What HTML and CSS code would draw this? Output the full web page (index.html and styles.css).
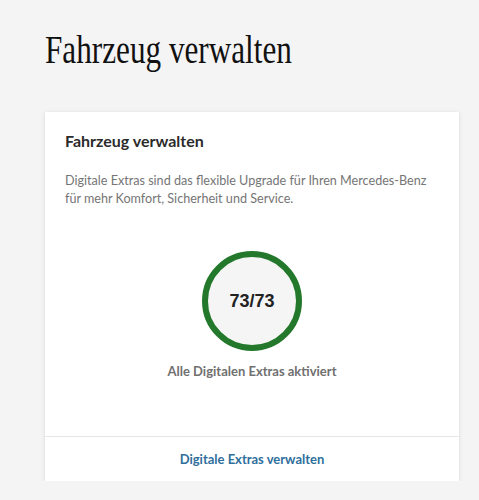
FILE: index.html
```html
<!DOCTYPE html>
<html lang="de">
<head>
<meta charset="utf-8">
<title>Fahrzeug verwalten</title>
<link rel="stylesheet" href="styles.css">
</head>
<body>
<main class="page">
  <h1 class="page-title"><span class="page-title-text">Fahrzeug verwalten</span></h1>
  <section class="card">
    <div class="card-body">
      <h2 class="card-title">Fahrzeug verwalten</h2>
      <p class="card-desc">Digitale Extras sind das flexible Upgrade für Ihren Mercedes-Benz für mehr Komfort, Sicherheit und Service.</p>
      <div class="gauge">
        <div class="gauge-ring"><span class="gauge-value">73/73</span></div>
        <p class="gauge-label">Alle Digitalen Extras aktiviert</p>
      </div>
    </div>
    <div class="card-footer">
      <a class="card-link" href="#">Digitale Extras verwalten</a>
    </div>
  </section>
</main>
</body>
</html>
```

FILE: styles.css
```css
html, body {
  margin: 0;
  padding: 0;
}
body {
  background: #f4f4f4;
  font-family: "Lato", "Noto Sans", sans-serif;
  color: #222;
}
.page {
  padding: 26px 20px 0 45px;
}
.page-title {
  margin: 0;
  font-family: "Liberation Serif", serif;
  font-weight: normal;
  font-size: 39px;
  line-height: 47px;
  color: #111;
}
.page-title-text {
  display: inline-block;
  transform: scaleX(0.8);
  transform-origin: left center;
  white-space: nowrap;
}
.card {
  margin-top: 39px;
  width: 414px;
  background: #fff;
  box-shadow: 0 1px 4px rgba(0,0,0,0.12);
}
.card-body {
  padding: 18px 20px 0 20px;
}
.card-title {
  margin: 0;
  font-size: 16px;
  line-height: 22px;
  font-weight: 700;
  color: #2b2b2b;
}
.card-desc {
  margin: 20px 0 0 0;
  font-size: 12.6px;
  line-height: 18px;
  color: #757575;
}
.gauge {
  display: flex;
  flex-direction: column;
  align-items: center;
  padding-top: 43px;
  padding-bottom: 56px;
}
.gauge-ring {
  box-sizing: border-box;
  width: 100px;
  height: 100px;
  border-radius: 50%;
  border: 6px solid #23782b;
  background: #f5f5f5;
  display: flex;
  align-items: center;
  justify-content: center;
}
.gauge-value {
  font-family: "Liberation Sans", Arial, sans-serif;
  font-weight: 700;
  font-size: 18px;
  color: #222;
}
.gauge-label {
  margin: 11px 0 0 0;
  font-size: 13px;
  line-height: 18px;
  font-weight: 700;
  color: #707070;
}
.card-footer {
  border-top: 1px solid #e6e6e6;
  height: 44px;
  display: flex;
  align-items: center;
  justify-content: center;
}
.card-link {
  font-size: 13px;
  font-weight: 700;
  color: #2f6f9c;
  text-decoration: none;
}
```
